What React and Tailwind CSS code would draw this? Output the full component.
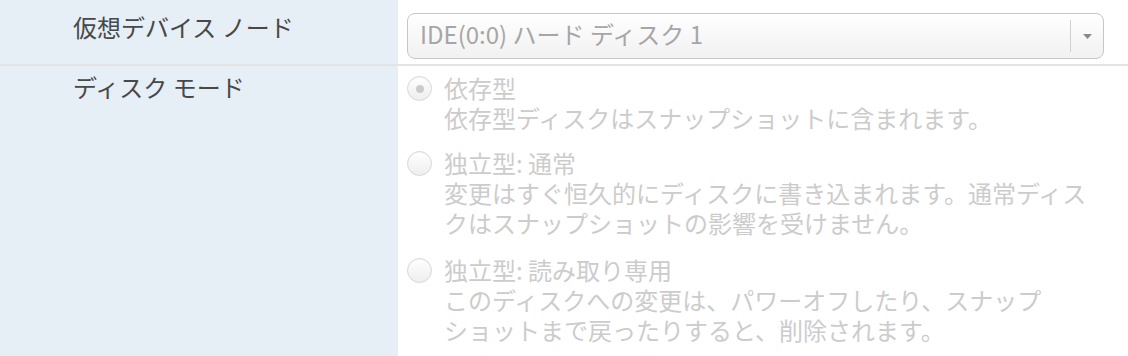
const FONT = "font-['Noto_Sans_CJK_JP','Noto_Sans',sans-serif]";

function Radio({ checked }) {
  return (
    <div className="mt-[3px] w-[25px] h-[25px] shrink-0 rounded-full border border-[#d8d8d8] bg-gradient-to-b from-white to-[#eeeeee] shadow-[inset_0_1px_1px_rgba(0,0,0,0.04)] flex items-center justify-center">
      {checked && <div className="w-[8px] h-[8px] rounded-full bg-[#cbcbcb]" />}
    </div>
  );
}

function Option({ checked, title, lines, className = '' }) {
  return (
    <div className={`flex gap-[12px] ${className}`}>
      <Radio checked={checked} />
      <div className="leading-[30px] text-[24px] text-[#cccccc]">
        <div>{title}</div>
        {lines.map((l) => (
          <div key={l}>{l}</div>
        ))}
      </div>
    </div>
  );
}

export default function App() {
  return (
    <div className={`w-[1128px] h-[356px] overflow-hidden bg-white ${FONT}`}>
      <div className="flex h-[66px] border-b-2 border-[#e4e4e4]">
        <div className="w-[398px] shrink-0 bg-[#e6eef6] pl-[73px] pt-[12px] text-[24px] leading-[30px] text-[#484848]">
          仮想デバイス ノード
        </div>
        <div className="flex-1 pl-[9px] pr-[24px] pt-[13px]">
          <div className="flex h-[46px] items-stretch rounded-[8px] border border-[#c6c6c6] bg-gradient-to-b from-white to-[#f1f1f1]">
            <div className="flex-1 flex items-center pl-[12px] pb-[4px] text-[24px] text-[#a6a6a6]">
              IDE(0:0) ハード ディスク 1
            </div>
            <div className="my-[6px] w-px bg-[#cfcfcf]" />
            <div className="w-[32px] flex items-center justify-center">
              <svg width="9" height="5" viewBox="0 0 9 5">
                <path d="M0 0H9L4.5 5Z" fill="#8a8a8a" />
              </svg>
            </div>
          </div>
        </div>
      </div>
      <div className="flex h-[290px]">
        <div className="w-[398px] shrink-0 bg-[#e6eef6] pl-[73px] pt-[6px] text-[24px] leading-[30px] text-[#484848]">
          ディスク モード
        </div>
        <div className="flex-1 pl-[9px] pt-[7px]">
          <Option checked title="依存型" lines={['依存型ディスクはスナップショットに含まれます。']} />
          <Option
            className="mt-[15px]"
            title="独立型: 通常"
            lines={['変更はすぐ恒久的にディスクに書き込まれます。通常ディス', 'クはスナップショットの影響を受けません。']}
          />
          <Option
            className="mt-[17px]"
            title="独立型: 読み取り専用"
            lines={['このディスクへの変更は、パワーオフしたり、スナップ', 'ショットまで戻ったりすると、削除されます。']}
          />
        </div>
      </div>
    </div>
  );
}
